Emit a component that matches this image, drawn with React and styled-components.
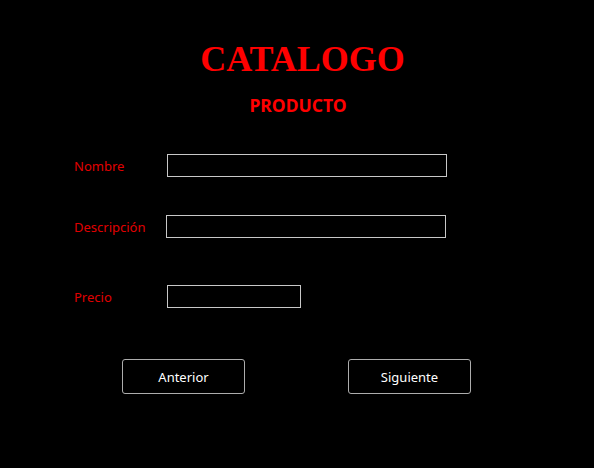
import React from 'react';
import styled, { createGlobalStyle } from 'styled-components';

const GlobalStyle = createGlobalStyle`
  html, body {
    margin: 0;
    padding: 0;
    background: #000;
  }
`;

const Page = styled.div`
  width: 594px;
  height: 468px;
  background: #000;
  display: flex;
  flex-direction: column;
  box-sizing: border-box;
  padding-top: 41px;
`;

const Header = styled.header`
  display: flex;
  flex-direction: column;
  align-items: center;
`;

const Title = styled.h1`
  margin: 0 0 0 11px;
  font-family: "Liberation Serif", "Times New Roman", serif;
  font-weight: bold;
  font-size: 36px;
  line-height: 36px;
  color: #ff0000;
`;

const Subtitle = styled.h2`
  margin: 17px 0 0 2px;
  font-family: "Segoe UI", "Noto Sans", sans-serif;
  font-weight: bold;
  font-size: 17.5px;
  line-height: 22px;
  color: #ff0000;
`;

const Form = styled.form`
  display: flex;
  flex-direction: column;
  padding-left: 74px;
  margin-top: 38px;
`;

const Row = styled.div`
  display: grid;
  grid-template-columns: ${p => p.$labelWidth || 93}px auto;
  align-items: center;
  margin-top: ${p => p.$top || 0}px;
`;

const Label = styled.label`
  font-family: "Segoe UI", "Noto Sans", sans-serif;
  font-size: 13px;
  color: #e00000;
`;

const Input = styled.input`
  box-sizing: border-box;
  width: ${p => p.$width}px;
  height: 23px;
  margin: 0;
  padding: 0 3px;
  background: #000;
  border: 1px solid #c8c8c8;
  color: #fff;
  outline: none;
`;

const Buttons = styled.div`
  display: flex;
  gap: 103px;
  padding-left: 122px;
  margin-top: 51px;
`;

const Button = styled.button`
  box-sizing: border-box;
  width: 123px;
  height: 35px;
  background: #000;
  border: 1px solid #adadad;
  border-radius: 3px;
  color: #fff;
  font-family: "Segoe UI", "Noto Sans", sans-serif;
  font-size: 13px;
  cursor: pointer;
`;

export default function App() {
  return (
    <>
      <GlobalStyle />
      <Page>
        <Header>
          <Title>CATALOGO</Title>
          <Subtitle>PRODUCTO</Subtitle>
        </Header>
        <Form onSubmit={e => e.preventDefault()}>
          <Row>
            <Label>Nombre</Label>
            <Input $width={280} />
          </Row>
          <Row $top={38} $labelWidth={92}>
            <Label>Descripción</Label>
            <Input $width={280} />
          </Row>
          <Row $top={47}>
            <Label>Precio</Label>
            <Input $width={134} />
          </Row>
        </Form>
        <Buttons>
          <Button type="button">Anterior</Button>
          <Button type="button">Siguiente</Button>
        </Buttons>
      </Page>
    </>
  );
}
